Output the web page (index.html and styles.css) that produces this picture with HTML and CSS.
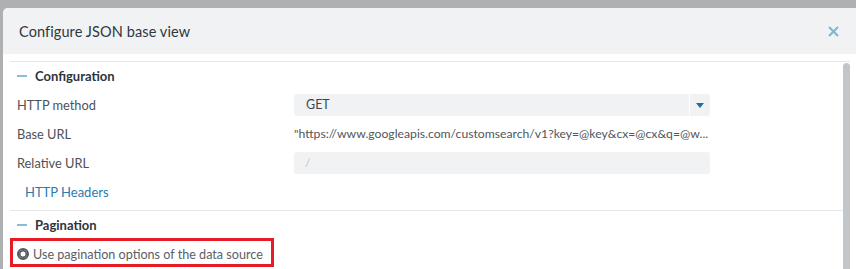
FILE: index.html
```html
<!DOCTYPE html>
<html lang="en">
<head>
    <meta charset="UTF-8">
    <title>Configure JSON base view</title>
    <link rel="stylesheet" href="styles.css">
</head>
<body>
    <div class="modal">
        <div class="modal-header">
            <h2>Configure JSON base view</h2>
            <svg class="close" width="11" height="11" viewBox="0 0 11 11">
                <path d="M1 1 L10 10 M10 1 L1 10" stroke="#7db6d6" stroke-width="2" fill="none"/>
            </svg>
        </div>
        <div class="modal-body">
            <div class="content">
                <!-- Configuration section -->
                <div class="section">
                    <div class="section-head"><span class="dash"></span>Configuration</div>
                    <div class="row">
                        <label>HTTP method</label>
                        <div class="select">
                            <span>GET</span>
                            <span class="arrow"></span>
                        </div>
                    </div>
                    <div class="row">
                        <label>Base URL</label>
                        <div class="value">"https://www.googleapis.com/customsearch/v1?key=@key&amp;cx=@cx&amp;q=@w...</div>
                    </div>
                    <div class="row">
                        <label>Relative URL</label>
                        <div class="input">/</div>
                    </div>
                    <div class="link-row"><a href="#">HTTP Headers</a></div>
                </div>
                <!-- Pagination section -->
                <div class="section last">
                    <div class="section-head"><span class="dash"></span>Pagination</div>
                    <div class="highlight">
                        <span class="radio"></span>
                        Use pagination options of the data source
                    </div>
                </div>
            </div>
            <div class="scrollbar"></div>
        </div>
    </div>
</body>
</html>
```

FILE: styles.css
```css
body {
    margin: 0;
    padding: 0;
    background-color: #aeb0b1;
    font-family: Lato, "Open Sans", sans-serif;
    overflow: hidden;
    height: 269px;
}

.modal {
    margin-top: 8px;
    margin-left: 3px;
    width: 854px;
    height: 261px;
    background-color: white;
    border-radius: 5px 0 0 0;
    overflow: hidden;
}

.modal-header {
    height: 46px;
    background-color: #f1f2f4;
    display: flex;
    align-items: center;
    justify-content: space-between;
    padding: 0 18px 0 16px;
}
.modal-header h2 {
    margin: 0;
    font-size: 14.5px;
    font-weight: normal;
    color: #2e3740;
    letter-spacing: 0.1px;
}
.close {
    display: block;
}

.modal-body {
    display: flex;
    margin: 7px 7px 0 7px;
    border-top: 1px solid #e5e6e8;
    height: 210px;
}
.content {
    flex: 1;
}
.scrollbar {
    width: 7px;
    margin-top: 1px;
    background-color: #c3c6c9;
    border-radius: 4px 4px 0 0;
}

.section {
    border-bottom: 1px solid #e5e6e8;
    padding-bottom: 3px;
}
.section.last {
    border-bottom: none;
}
.section-head {
    height: 28px;
    display: flex;
    align-items: center;
    padding-left: 7px;
    font-size: 13px;
    font-weight: bold;
    color: #2c343c;
}
.dash {
    width: 10px;
    height: 2px;
    background-color: #86bddb;
    margin-right: 8px;
}

.row {
    height: 29px;
    display: flex;
    align-items: center;
    padding-left: 7px;
    font-size: 12.8px;
    color: #4d5258;
}
.row label {
    width: 277px;
}
.select, .input {
    width: 416px;
    height: 22px;
    box-sizing: border-box;
    background-color: #f1f2f4;
    border-radius: 3px;
    display: flex;
    align-items: center;
}
.select span:first-child {
    flex: 1;
    padding-left: 12px;
    font-size: 12.5px;
    color: #3e444a;
}
.arrow {
    width: 20px;
    height: 22px;
    border-left: 1px solid #ffffff;
    position: relative;
}
.arrow::after {
    content: "";
    position: absolute;
    left: 6px;
    top: 9px;
    border-left: 4px solid transparent;
    border-right: 4px solid transparent;
    border-top: 5px solid #1a6ea5;
}
.value {
    font-size: 12.2px;
    color: #50565c;
}
.input {
    padding-left: 11px;
    font-size: 12px;
    color: #c3c6ca;
}

.link-row {
    height: 30px;
    display: flex;
    align-items: center;
    padding-left: 15px;
    font-size: 13px;
}
.link-row a {
    color: #2b7bb0;
    text-decoration: none;
}

.highlight {
    display: inline-flex;
    align-items: center;
    gap: 4px;
    margin-top: -1px;
    box-sizing: border-box;
    width: 264px;
    height: 29px;
    border: 3px solid #e51c26;
    padding: 3px 0 0 4px;
    font-size: 12.6px;
    color: #5a6067;
}
.radio {
    width: 8px;
    height: 8px;
    border-radius: 50%;
    border: 2.5px solid #525a62;
    background-color: #ffffff;
    box-shadow: inset 0 0 0 1.5px #525a62;
}
```
